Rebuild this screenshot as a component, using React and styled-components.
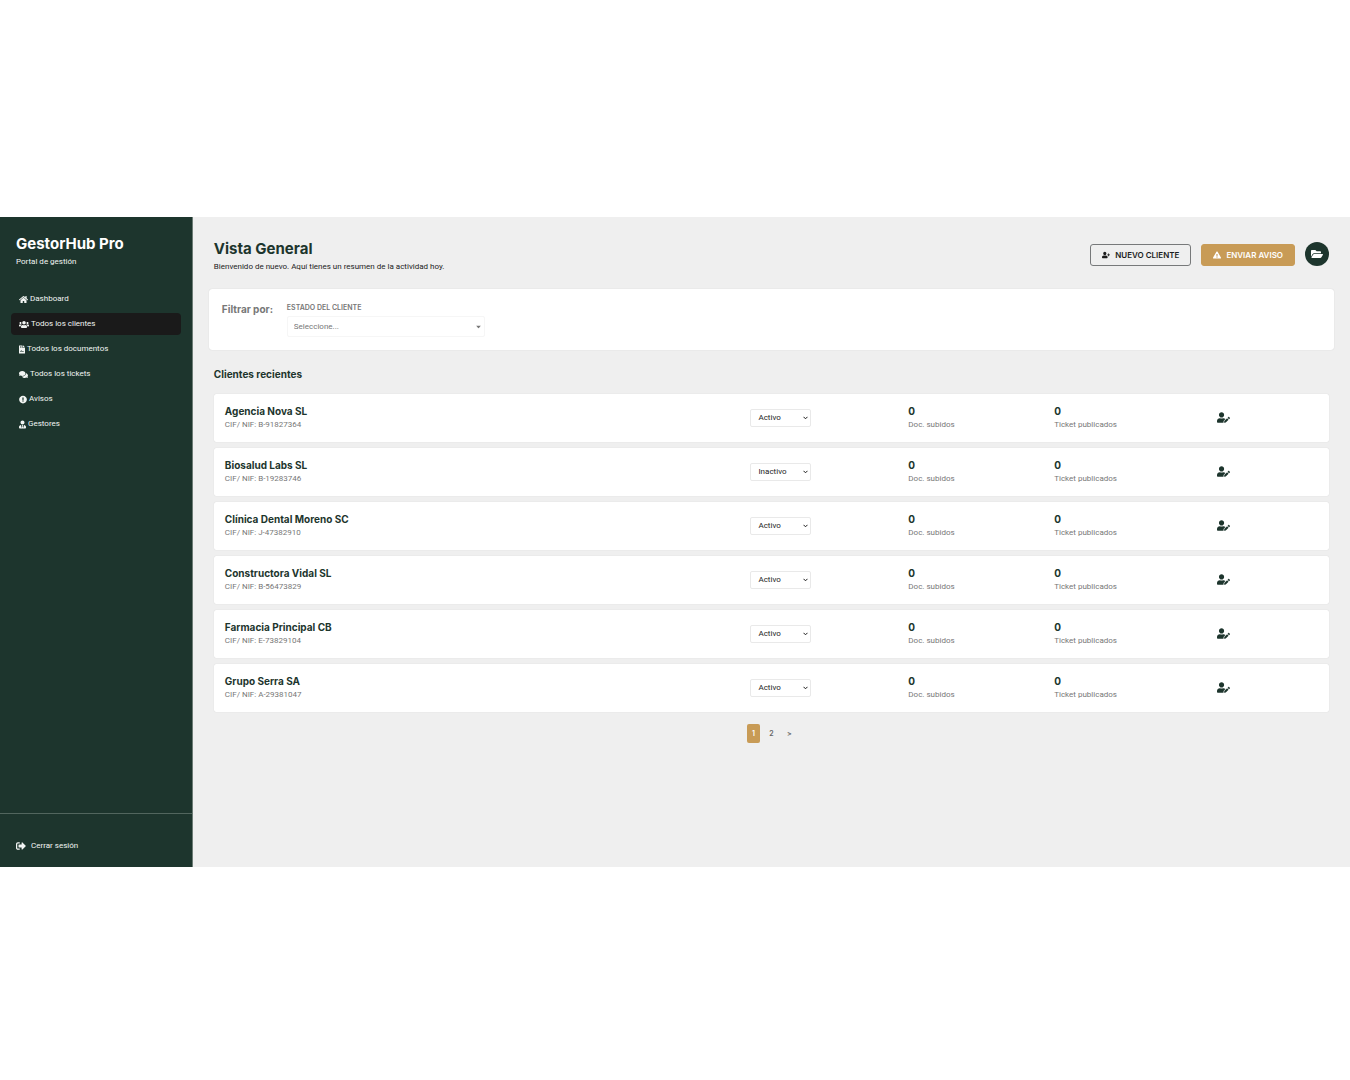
import React from "react";
import styled, { createGlobalStyle } from "styled-components";
import {
  FaHome, FaUsers, FaFileContract, FaComments, FaExclamationCircle, FaUserTie,
  FaSignOutAlt, FaUserPlus, FaExclamationTriangle, FaFolderOpen, FaUserEdit,
} from "react-icons/fa";

const green = "#1d352d";
const gold = "#c89b56";
const display = `Inter, "Liberation Sans", sans-serif`;

const GlobalStyle = createGlobalStyle`
  *, *::before, *::after { box-sizing: border-box; }
  body { margin: 0; background: #fff; color: #1c1c1c; font: 400 8px/12px Roboto, "Liberation Sans", sans-serif; }
  h1, h2, h3, p { margin: 0; }
  a { color: inherit; text-decoration: none; }
  button, select { font: inherit; margin: 0; }
`;

const Shell = styled.div`
  display: grid;
  grid-template-columns: 1fr 6fr;
  min-height: 650px;
  margin: 217px 0;
  background: #efefef;
`;

const Sidebar = styled.aside`
  display: flex;
  flex-direction: column;
  background: ${green};
  color: #f2f5f3;
  border-right: 1px solid #6c7c75;
`;

const Brand = styled.div`
  padding: 17px 16px 18px;
`;

const BrandName = styled.p`
  font: 700 15px/20px ${display};
  color: #fff;
`;

const Tagline = styled.p`
  line-height: 16px;
`;

const Nav = styled.nav`
  display: grid;
  gap: 3px;
  padding: 0 11px;
`;

const NavLink = styled.a`
  display: flex;
  align-items: center;
  gap: 2px;
  height: 22px;
  padding: 0 8px;
  border-radius: 4px;
  background: ${(p) => (p.$active ? "#1a1a1a" : "transparent")};
  svg { height: 9px; width: ${(p) => p.$iconWidth}px; }
`;

const SidebarFooter = styled.div`
  margin-top: auto;
  border-top: 1px solid #52665e;
  padding: 22px 16px 11px;
`;

const Logout = styled.a`
  display: inline-flex;
  align-items: center;
  gap: 5px;
  height: 20px;
  svg { width: 10px; height: 10px; }
`;

const Main = styled.main`
  padding: 22px 21px;
`;

const Header = styled.header`
  display: flex;
  justify-content: space-between;
  align-items: flex-start;
  min-height: 50px;
`;

const Title = styled.h1`
  font: 700 15px/20px ${display};
  color: ${green};
`;

const Intro = styled.p`
  line-height: 16px;
`;

const Actions = styled.div`
  display: flex;
  align-items: center;
  gap: 10px;
  padding-top: 3px;
`;

const Button = styled.button`
  display: flex;
  align-items: center;
  gap: 5px;
  height: 22px;
  margin-top: 2px;
  padding: 0 11px;
  border: 1px solid ${(p) => (p.$primary ? gold : "#77797a")};
  border-radius: 3px;
  background: ${(p) => (p.$primary ? gold : "transparent")};
  color: ${(p) => (p.$primary ? "#fff" : "#1c1c1c")};
  font: 600 8px/12px Inter, sans-serif;
  text-transform: uppercase;
  svg { width: 8px; height: 8px; }
`;

const RoundButton = styled.button`
  display: grid;
  place-items: center;
  width: 24px;
  height: 24px;
  padding: 0;
  border: 0;
  border-radius: 50%;
  background: ${green};
  color: #fff;
  svg { width: 12px; height: 12px; }
`;

const Filters = styled.section`
  display: flex;
  gap: 10px;
  margin: 0 -5px;
  padding: 13px;
  min-height: 61px;
  background: #fff;
  border-radius: 3px;
  box-shadow: 0 0 1px rgba(0, 0, 0, 0.2);
`;

const FiltersTitle = styled.h2`
  min-width: 55px;
  font: 700 10px/14px ${display};
  color: #777;
`;

const Field = styled.div`
  width: 198px;
`;

const FieldLabel = styled.label`
  display: block;
  margin-bottom: 2px;
  font: 600 7px/12px Inter, sans-serif;
  color: #777;
  text-transform: uppercase;
`;

const SelectBox = styled.span`
  position: relative;
  display: block;
  svg {
    position: absolute;
    top: 50%;
    right: ${(p) => (p.$wide ? 4 : 3)}px;
    transform: translateY(-50%);
    pointer-events: none;
  }
`;

const Select = styled.select`
  display: block;
  appearance: none;
  width: 100%;
  height: ${(p) => (p.$wide ? 21 : 18)}px;
  padding: 0 ${(p) => (p.$wide ? 6 : 7)}px;
  border: 1px solid ${(p) => (p.$wide ? "#f6f6f6" : "#e9e9e9")};
  border-radius: 2px;
  background: #fff;
  color: ${(p) => (p.$wide ? "#777" : "#1c1c1c")};
`;

const SectionTitle = styled.h2`
  margin: 16px 0 12px;
  font: 700 10px/16px ${display};
  color: ${green};
`;

const List = styled.div`
  display: grid;
  gap: 6px;
`;

const Row = styled.article`
  display: grid;
  grid-template-columns: 526fr 158fr 146fr 162fr 102fr;
  align-items: center;
  height: 48px;
  padding: 0 11px;
  background: #fff;
  border-radius: 2px;
  box-shadow: 0 0 1px rgba(0, 0, 0, 0.18);
`;

const Strong = styled.h3`
  font: 700 10px/14px ${display};
  color: ${green};
`;

const Muted = styled.p`
  line-height: 14px;
  color: #777;
`;

const Status = styled.div`
  width: 61px;
`;

const EditButton = styled.button`
  display: block;
  justify-self: start;
  padding: 0 1px 2px;
  border: 0;
  background: none;
  color: ${green};
  svg { display: block; width: 13px; height: 11px; }
`;

const Pages = styled.nav`
  display: flex;
  justify-content: center;
  gap: 5px;
  margin-top: 12px;
`;

const Page = styled.a`
  display: grid;
  place-items: center;
  width: 13px;
  height: 19px;
  border-radius: 2px;
  background: ${(p) => (p.$active ? gold : "transparent")};
  color: ${(p) => (p.$active ? "#fff" : "#666")};
  font: 600 7px/12px Inter, sans-serif;
`;

const nav = [
  ["Dashboard", FaHome, 9],
  ["Todos los clientes", FaUsers, 10],
  ["Todos los documentos", FaFileContract, 6],
  ["Todos los tickets", FaComments, 9],
  ["Avisos", FaExclamationCircle, 8],
  ["Gestores", FaUserTie, 7],
];

const clients = [
  ["Agencia Nova SL", "B-91827364", "Activo"],
  ["Biosalud Labs SL", "B-19283746", "Inactivo"],
  ["Clínica Dental Moreno SC", "J-47382910", "Activo"],
  ["Constructora Vidal SL", "B-56473829", "Activo"],
  ["Farmacia Principal CB", "E-73829104", "Activo"],
  ["Grupo Serra SA", "A-29381047", "Activo"],
];

function Client({ name, id, status }) {
  return (
    <Row>
      <div>
        <Strong>{name}</Strong>
        <Muted>CIF/ NIF: {id}</Muted>
      </div>
      <Status>
        <SelectBox>
          <Select aria-label={`Estado de ${name}`} defaultValue={status}>
            <option>Activo</option>
            <option>Inactivo</option>
          </Select>
          <svg width="5" height="4" viewBox="0 0 5 4" fill="none" stroke="#1c1c1c">
            <path d="M.5 .8 2.5 2.8 4.5 .8" />
          </svg>
        </SelectBox>
      </Status>
      <div>
        <Strong as="p">0</Strong>
        <Muted>Doc. subidos</Muted>
      </div>
      <div>
        <Strong as="p">0</Strong>
        <Muted>Ticket publicados</Muted>
      </div>
      <EditButton type="button" aria-label={`Editar ${name}`}><FaUserEdit /></EditButton>
    </Row>
  );
}

export default function App() {
  return (
    <>
      <GlobalStyle />
      <Shell>
        <Sidebar>
          <Brand>
            <BrandName>GestorHub Pro</BrandName>
            <Tagline>Portal de gestión</Tagline>
          </Brand>
          <Nav>
            {nav.map(([label, Icon, width], i) => (
              <NavLink key={label} href="#" $active={i === 1} $iconWidth={width}>
                <Icon />{label}
              </NavLink>
            ))}
          </Nav>
          <SidebarFooter>
            <Logout href="#"><FaSignOutAlt />Cerrar sesión</Logout>
          </SidebarFooter>
        </Sidebar>
        <Main>
          <Header>
            <div>
              <Title>Vista General</Title>
              <Intro>Bienvenido de nuevo. Aquí tienes un resumen de la actividad hoy.</Intro>
            </div>
            <Actions>
              <Button type="button"><FaUserPlus />Nuevo cliente</Button>
              <Button type="button" $primary><FaExclamationTriangle />Enviar aviso</Button>
              <RoundButton type="button" aria-label="Abrir carpeta"><FaFolderOpen /></RoundButton>
            </Actions>
          </Header>
          <Filters>
            <FiltersTitle>Filtrar por:</FiltersTitle>
            <Field>
              <FieldLabel htmlFor="estado">Estado del cliente</FieldLabel>
              <SelectBox $wide>
                <Select id="estado" $wide defaultValue="">
                  <option value="">Seleccione...</option>
                  <option>Activo</option>
                  <option>Inactivo</option>
                </Select>
                <svg width="5" height="3" viewBox="0 0 5 3" fill="#777"><path d="M0 0h5L2.5 3z" /></svg>
              </SelectBox>
            </Field>
          </Filters>
          <SectionTitle>Clientes recientes</SectionTitle>
          <List>
            {clients.map(([name, id, status]) => (
              <Client key={id} name={name} id={id} status={status} />
            ))}
          </List>
          <Pages aria-label="Paginación">
            <Page href="#" $active>1</Page>
            <Page href="#">2</Page>
            <Page href="#" aria-label="Siguiente">&gt;</Page>
          </Pages>
        </Main>
      </Shell>
    </>
  );
}
